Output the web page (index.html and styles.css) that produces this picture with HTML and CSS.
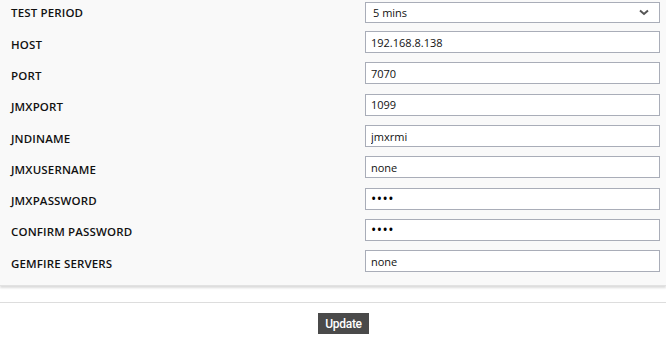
FILE: index.html
```html
<!DOCTYPE html>
<html>
<head>
<meta charset="utf-8">
<link rel="stylesheet" href="styles.css">
</head>
<body>
<div class="panel">
  <div class="row row-first">
    <label class="lbl">TEST PERIOD</label>
    <div class="select"><span>5 mins</span><svg class="chev" width="10" height="7" viewBox="0 0 10 7"><path d="M1 1.5 L5 5 L9 1.5" fill="none" stroke="#555" stroke-width="2"/></svg></div>
  </div>
  <div class="row"><label class="lbl">HOST</label><input class="inp" value="192.168.8.138"></div>
  <div class="row"><label class="lbl">PORT</label><input class="inp" value="7070"></div>
  <div class="row"><label class="lbl">JMXPORT</label><input class="inp" value="1099"></div>
  <div class="row"><label class="lbl">JNDINAME</label><input class="inp" value="jmxrmi"></div>
  <div class="row"><label class="lbl">JMXUSERNAME</label><input class="inp" value="none"></div>
  <div class="row"><label class="lbl">JMXPASSWORD</label><input class="inp pw" type="password" value="none"></div>
  <div class="row"><label class="lbl">CONFIRM PASSWORD</label><input class="inp pw" type="password" value="none"></div>
  <div class="row"><label class="lbl">GEMFIRE SERVERS</label><input class="inp" value="none"></div>
</div>
<div class="footer">
  <button class="btn">Update</button>
</div>
</body>
</html>
```
FILE: styles.css
```css
html, body { margin: 0; padding: 0; background: #fff; }
body { font-family: "Open Sans", "DejaVu Sans", sans-serif; color: #111; }
.panel {
  background: #f9f9f9;
  height: 286px;
  box-sizing: border-box;
  border-bottom: 1px solid #e2e2e2;
  box-shadow: 0 2px 2px #dcdcdc;
}
.row {
  display: flex;
  align-items: center;
  box-sizing: border-box;
  height: 31.3px;
  padding: 0 6px 0 11px;
}
.row-first { height: 26.5px; align-items: flex-start; padding-top: 2px; }
.lbl {
  flex: 1;
  font-size: 11.5px;
  font-weight: 600;
  letter-spacing: 0.15px;
  color: #111;
  position: relative;
  top: 2px;
}
.row-first .lbl { top: 3px; }
.inp, .select {
  width: 295px;
  height: 22px;
  box-sizing: border-box;
  border: 1px solid #a9adb8;
  background: #fff;
  font-family: "Open Sans", "DejaVu Sans", sans-serif;
  font-size: 11px;
  color: #111;
  padding: 0 5px;
  margin: 0;
  outline: none;
}
.select {
  height: 21px;
  display: flex;
  align-items: center;
  justify-content: space-between;
  padding: 0 10px 0 7px;
}
.chev { display: block; }
.pw { font-size: 14px; letter-spacing: 0.5px; color: #000; }
.footer {
  margin-top: 16px;
  border-top: 1px solid #ddd;
  display: flex;
  justify-content: center;
  padding-top: 10px;
}
.btn {
  background: #4a4a4a;
  color: #fff;
  border: none;
  height: 21px;
  width: 51px;
  padding: 0;
  font-family: "Roboto", "DejaVu Sans", sans-serif;
  font-size: 12px;
  font-weight: 500;
  letter-spacing: -0.3px;
  margin-left: 21px;
}
```
